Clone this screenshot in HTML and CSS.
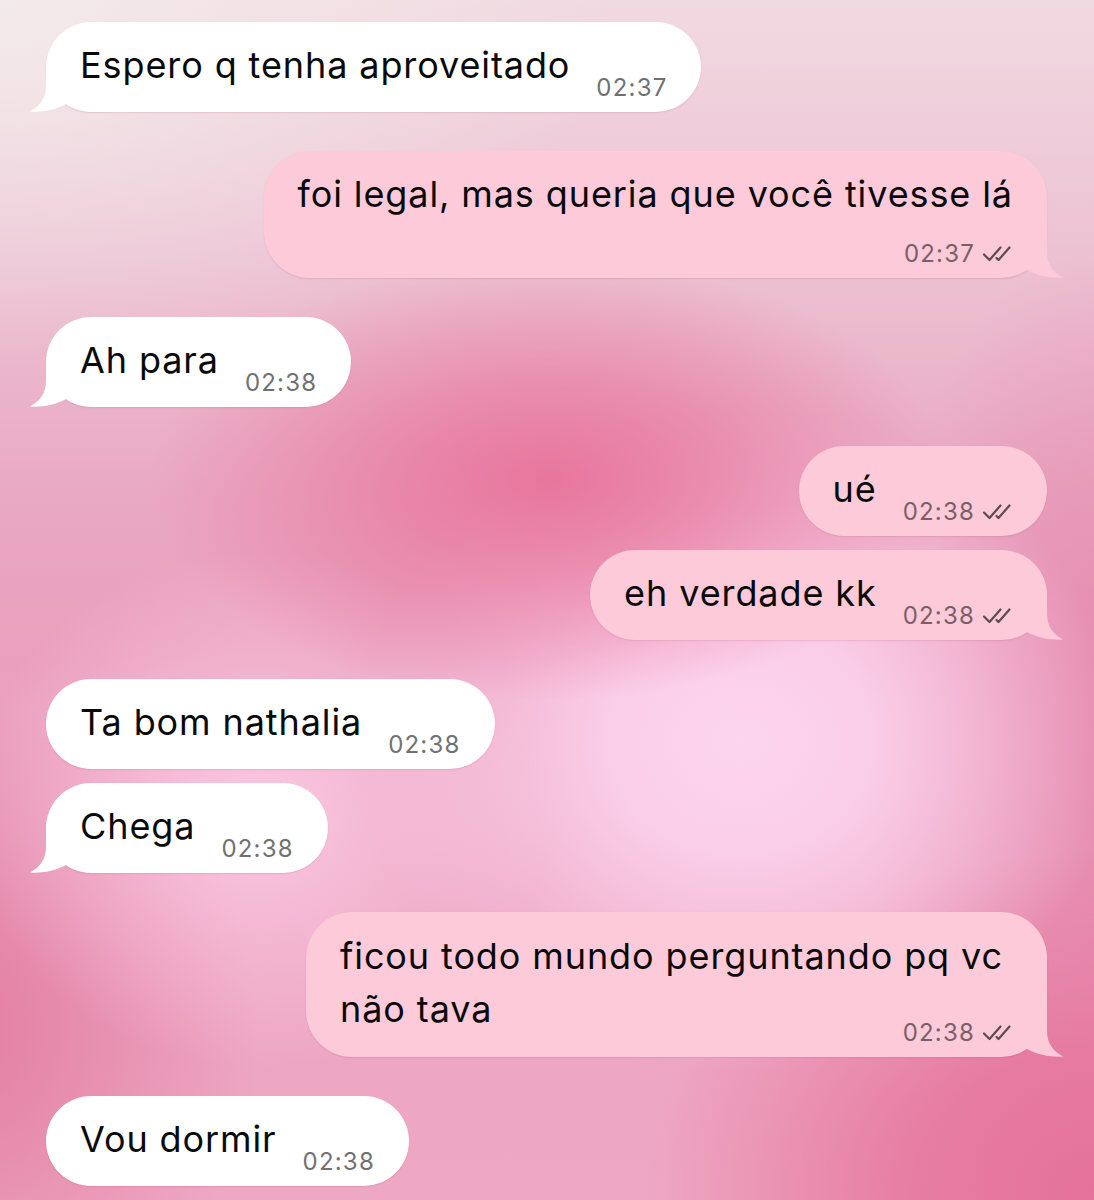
FILE: index.html
```html
<!DOCTYPE html>
<html lang="pt">
<head>
<meta charset="utf-8">
<title>Chat</title>
<link rel="stylesheet" href="styles.css">
</head>
<body>
<main class="chat">
  <div class="row in">
    <div class="bubble in tailed">
      <svg class="tail" viewBox="0 0 60 50" width="60" height="50"><path d="M16,0 L16,24 C16,36 10,44 0,49.5 C10,50.5 26,48 36,42 L36,0 Z"/></svg>
      <div class="text">Espero q tenha aproveitado<span class="meta"><span class="time">02:37</span></span></div>
    </div>
  </div>

  <div class="row out grp">
    <div class="bubble out tailed wrapmeta">
      <svg class="tail" viewBox="0 0 60 50" width="60" height="50"><path d="M16,0 L16,24 C16,36 10,44 0,49.5 C10,50.5 26,48 36,42 L36,0 Z"/></svg>
      <div class="text">foi legal, mas queria que você tivesse lá<span class="meta"><span class="time">02:37</span><svg class="checks" viewBox="0 0 32 18" width="32" height="18"><path d="M3,9.5 L8.5,15 L19.5,2.5"/><path d="M15.5,13 L17.5,15 L28.5,2.5"/></svg></span></div>
    </div>
  </div>

  <div class="row in grp">
    <div class="bubble in tailed">
      <svg class="tail" viewBox="0 0 60 50" width="60" height="50"><path d="M16,0 L16,24 C16,36 10,44 0,49.5 C10,50.5 26,48 36,42 L36,0 Z"/></svg>
      <div class="text">Ah para<span class="meta"><span class="time">02:38</span></span></div>
    </div>
  </div>

  <div class="row out grp">
    <div class="bubble out">
      <div class="text">ué<span class="meta"><span class="time">02:38</span><svg class="checks" viewBox="0 0 32 18" width="32" height="18"><path d="M3,9.5 L8.5,15 L19.5,2.5"/><path d="M15.5,13 L17.5,15 L28.5,2.5"/></svg></span></div>
    </div>
  </div>

  <div class="row out">
    <div class="bubble out tailed">
      <svg class="tail" viewBox="0 0 60 50" width="60" height="50"><path d="M16,0 L16,24 C16,36 10,44 0,49.5 C10,50.5 26,48 36,42 L36,0 Z"/></svg>
      <div class="text">eh verdade kk<span class="meta"><span class="time">02:38</span><svg class="checks" viewBox="0 0 32 18" width="32" height="18"><path d="M3,9.5 L8.5,15 L19.5,2.5"/><path d="M15.5,13 L17.5,15 L28.5,2.5"/></svg></span></div>
    </div>
  </div>

  <div class="row in grp">
    <div class="bubble in">
      <div class="text">Ta bom nathalia<span class="meta"><span class="time">02:38</span></span></div>
    </div>
  </div>

  <div class="row in">
    <div class="bubble in tailed">
      <svg class="tail" viewBox="0 0 60 50" width="60" height="50"><path d="M16,0 L16,24 C16,36 10,44 0,49.5 C10,50.5 26,48 36,42 L36,0 Z"/></svg>
      <div class="text">Chega<span class="meta"><span class="time">02:38</span></span></div>
    </div>
  </div>

  <div class="row out grp">
    <div class="bubble out tailed multi">
      <svg class="tail" viewBox="0 0 60 50" width="60" height="50"><path d="M16,0 L16,24 C16,36 10,44 0,49.5 C10,50.5 26,48 36,42 L36,0 Z"/></svg>
      <div class="text">ficou todo mundo perguntando pq vc<br>não tava<span class="meta"><span class="time">02:38</span><svg class="checks" viewBox="0 0 32 18" width="32" height="18"><path d="M3,9.5 L8.5,15 L19.5,2.5"/><path d="M15.5,13 L17.5,15 L28.5,2.5"/></svg></span></div>
    </div>
  </div>

  <div class="row in grp">
    <div class="bubble in">
      <div class="text">Vou dormir<span class="meta"><span class="time">02:38</span></span></div>
    </div>
  </div>
</main>
</body>
</html>
```

FILE: styles.css
```css
html, body {
  margin: 0;
  padding: 0;
}

body {
  width: 1094px;
  height: 1200px;
  overflow: hidden;
  font-family: Inter, "Noto Sans", "Liberation Sans", sans-serif;
  background:
    radial-gradient(ellipse 400px 220px at 550px 480px, rgba(232,118,157,1) 0%, rgba(232,118,157,0.65) 40%, rgba(232,118,157,0) 100%),
    radial-gradient(ellipse 380px 330px at 740px 740px, rgba(253,213,239,1) 0%, rgba(253,213,239,0.85) 35%, rgba(253,213,239,0) 100%),
    radial-gradient(ellipse 290px 260px at 260px 810px, rgba(250,200,226,1), rgba(250,200,226,0)),
    radial-gradient(ellipse 300px 330px at -40px 1030px, rgba(227,125,161,1), rgba(227,125,161,0)),
    radial-gradient(ellipse 450px 340px at 1094px 1190px, rgba(229,114,154,1) 0%, rgba(229,114,154,0.8) 40%, rgba(229,114,154,0) 100%),
    radial-gradient(ellipse 260px 520px at 1120px 760px, rgba(228,132,170,0.85), rgba(228,132,170,0)),
    radial-gradient(ellipse 620px 360px at 0 0, rgba(243,234,235,1), rgba(243,234,235,0)),
    linear-gradient(180deg, #f1d9e1 0%, #ecc1d2 22%, #e9a8c2 42%, #ea9fbd 55%, #eba3c0 68%, #eea8c3 100%);
}

.chat {
  display: flex;
  flex-direction: column;
  padding: 22px 47px 0 46px;
  gap: 14px;
}

.row {
  display: flex;
}

.row.in {
  justify-content: flex-start;
}

.row.out {
  justify-content: flex-end;
}

.row.grp {
  margin-top: 25px;
}

.bubble {
  position: relative;
  isolation: isolate;
  max-width: 800px;
  box-sizing: border-box;
  padding: 18px 34px 10px 34px;
  border-radius: 46px;
  display: flow-root;
  box-shadow: 0 1px 1.5px rgba(170, 70, 110, 0.18);
}

.bubble.in {
  background: #ffffff;
}

.bubble.out {
  background: #fccad8;
}

.bubble.multi {
  padding-right: 44px;
}

.tail {
  position: absolute;
  bottom: 0;
  z-index: -1;
  overflow: visible;
}

.bubble.in .tail {
  left: -16px;
  fill: #ffffff;
}

.bubble.out .tail {
  right: -16px;
  fill: #fccad8;
  transform: scaleX(-1);
}

.text {
  font-size: 36px;
  line-height: 51px;
  color: #0a0a0a;
  letter-spacing: 0.9px;
}

.bubble.multi .text {
  line-height: 53px;
}

.meta {
  float: right;
  display: flex;
  align-items: center;
  gap: 6px;
  margin: 34px 0 0 26px;
  height: 28px;
  line-height: 28px;
  letter-spacing: 1.2px;
}

.bubble.multi .meta {
  margin-top: 36px;
  margin-right: -10px;
}

.bubble.wrapmeta .meta {
  float: none;
  justify-content: flex-end;
  margin: 20px 0 0 0;
}

.time {
  font-size: 24px;
}

.bubble.in .time {
  color: #717171;
}

.bubble.out .time {
  color: #7a5f67;
}

.checks {
  fill: none;
  stroke: #5e4a52;
  stroke-width: 2.2;
  stroke-linecap: round;
  stroke-linejoin: round;
}
```
